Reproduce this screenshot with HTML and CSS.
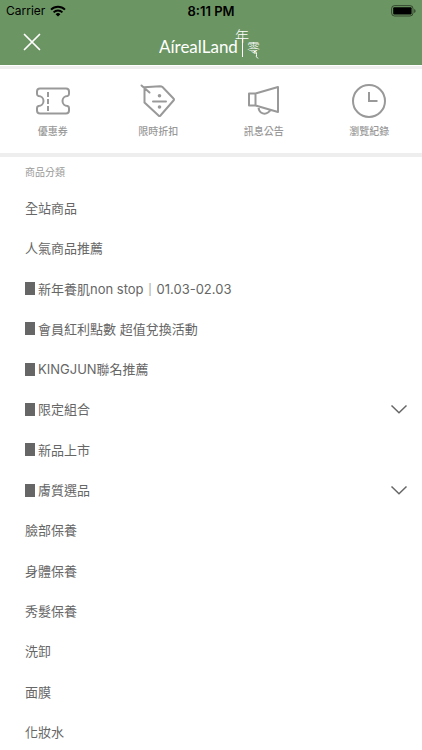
FILE: index.html
```html
<!DOCTYPE html>
<html lang="zh-Hant">
<head>
<meta charset="utf-8">
<meta name="viewport" content="width=device-width, initial-scale=1">
<title>AírealLand 年零</title>
<link rel="stylesheet" href="styles.css">
</head>
<body>
<header class="top">
  <div class="status">
    <div class="carrier">
      <span>Carrier</span>
      <svg width="16" height="12" viewBox="0 0 16 12" aria-hidden="true">
        <g fill="none" stroke="#000" stroke-width="2">
          <path d="M1 4.6a10 10 0 0 1 14 0"/>
          <path d="M3.6 7.4a6.3 6.3 0 0 1 8.8 0"/>
        </g>
        <path d="M5.6 9.2a3.4 3.4 0 0 1 4.8 0L8 11.6z"/>
      </svg>
    </div>
    <time class="clock">8:11 PM</time>
    <svg class="battery" width="25" height="12" viewBox="0 0 25 12" aria-hidden="true">
      <rect x=".6" y=".6" width="21.4" height="10.4" rx="3" fill="none" stroke="#000" stroke-opacity=".5"/>
      <rect x="2.2" y="2.2" width="18.4" height="7.4" rx="1"/>
      <path d="M23.2 4v4q1.4-.6 1.4-2t-1.4-2z" fill-opacity=".55"/>
    </svg>
  </div>
  <div class="brand">
    <button class="close" type="button" aria-label="關閉">
      <svg width="18" height="18" viewBox="0 0 18 18" aria-hidden="true"><path d="M1.500 1.500l15 15M16.500 1.500l-15 15" fill="none" stroke="#fff" stroke-width="1.700" stroke-linecap="round"/></svg>
    </button>
    <a class="logo" href="#" aria-label="AírealLand 年零">
      <svg width="104" height="36" viewBox="0 0 104 36">
        <text class="logo-latin" x="0" y="29">AírealLand</text>
        <text class="logo-nian" x="76" y="17">年</text>
        <text class="logo-ling" x="88" y="28">零</text>
        <path d="M83.500 15v18M94.500 27q4 1 3 3.500t1.500 4" fill="none" stroke="#fff" stroke-width="1"/>
      </svg>
    </a>
  </div>
</header>

<nav class="shortcuts" aria-label="快捷">
  <a class="shortcut" href="#">
    <svg width="36" height="36" viewBox="0 0 36 36" aria-hidden="true">
      <path d="M5 5.500h26q3 0 3 3v2.500q0 1.500-1.500 2a5 5 0 0 0 0 10q1.500.5 1.500 2v2.500q0 3-3 3H5q-3 0-3-3V25q0-1.500 1.500-2a5 5 0 0 0 0-10Q2 12.500 2 11V8.500q0-3 3-3z"/>
      <path d="M13 9v5M13 16v5M13 23v5"/>
    </svg>
    <span>優惠券</span>
  </a>
  <a class="shortcut" href="#">
    <svg width="36" height="36" viewBox="0 0 36 36" aria-hidden="true">
      <path d="M4 4.200L20 3.200q1.500 0 2.500.8L33.500 15.500q1 1 0 2L20.500 32.500q-1 1-2 0L4.500 19.500V4.500M1.500 2.500l8 7M13 18.500h13" stroke-linecap="round"/>
      <circle class="dot" cx="19.500" cy="12.800" r="1.800"/><circle class="dot" cx="19.500" cy="24" r="1.800"/>
    </svg>
    <span>限時折扣</span>
  </a>
  <a class="shortcut" href="#">
    <svg width="36" height="36" viewBox="0 0 36 36" aria-hidden="true">
      <path d="M3 10.500h6.500v12H3zM9.500 10.500L32 4v25L9.500 22.500M12.500 23.500q0 4 2.500 6 3.500 2.500 7 0 2-1.200 2.500-3" stroke-linejoin="round"/>
    </svg>
    <span>訊息公告</span>
  </a>
  <a class="shortcut" href="#">
    <svg width="36" height="36" viewBox="0 0 36 36" aria-hidden="true">
      <circle cx="18" cy="18" r="16"/>
      <path d="M18 9v9h8.500"/>
    </svg>
    <span>瀏覽紀錄</span>
  </a>
</nav>

<main class="categories">
  <h2 class="heading">商品分類</h2>
  <ul class="list">
    <li><a class="row" href="#">全站商品</a></li>
    <li><a class="row" href="#">人氣商品推薦</a></li>
    <li><a class="row marked" href="#">新年養肌non stop｜01.03-02.03</a></li>
    <li><a class="row marked" href="#">會員紅利點數 超值兌換活動</a></li>
    <li><a class="row marked" href="#">KINGJUN聯名推薦</a></li>
    <li><button class="row marked" type="button" aria-expanded="false">限定組合<svg class="chevron" width="18" height="10" viewBox="0 0 18 10" aria-hidden="true"><path d="M1.500 1.500L9 8.700l7.500-7.200"/></svg></button></li>
    <li><a class="row marked" href="#">新品上市</a></li>
    <li><button class="row marked" type="button" aria-expanded="false">膚質選品<svg class="chevron" width="18" height="10" viewBox="0 0 18 10" aria-hidden="true"><path d="M1.500 1.500L9 8.700l7.500-7.200"/></svg></button></li>
    <li><a class="row" href="#">臉部保養</a></li>
    <li><a class="row" href="#">身體保養</a></li>
    <li><a class="row" href="#">秀髮保養</a></li>
    <li><a class="row" href="#">洗卸</a></li>
    <li><a class="row" href="#">面膜</a></li>
    <li><a class="row" href="#">化妝水</a></li>
  </ul>
</main>
</body>
</html>
```
FILE: styles.css
```css
* {
  box-sizing: border-box;
}

body {
  margin: 0;
  min-height: 100vh;
  display: flex;
  flex-direction: column;
  background: #fff;
  color: #666;
  font: 13px/20px Inter, "Noto Sans CJK TC", sans-serif;
}

a {
  color: inherit;
  text-decoration: none;
}

button {
  border: 0;
  background: none;
  color: inherit;
  font: inherit;
  cursor: pointer;
}

svg {
  display: block;
  flex: none;
}

.top {
  background: #6b9562;
  padding-bottom: 3px;
}

.status {
  display: grid;
  grid-template-columns: 1fr auto 1fr;
  align-items: center;
  height: 22px;
  padding: 0 6px;
  color: #000;
  font-size: 12px;
}

.carrier {
  display: flex;
  align-items: center;
  gap: 5px;
}

.clock {
  font-size: 13px;
  font-weight: 600;
}

.battery {
  justify-self: end;
}

.brand {
  display: grid;
  grid-template-columns: 1fr auto 1fr;
  align-items: center;
  height: 40px;
}

.close {
  justify-self: start;
  margin-left: 15px;
  padding: 8px;
}

.logo text {
  fill: #fff;
}

.logo .logo-latin {
  font: 17px Lato, sans-serif;
}

.logo .logo-nian {
  font: 300 14px "Noto Sans CJK TC", sans-serif;
}

.logo .logo-ling {
  font: 300 13px "Noto Sans CJK TC", sans-serif;
}

.shortcuts {
  display: grid;
  grid-template-columns: repeat(4, 1fr);
  margin-top: 1px;
  padding: 14px 0 13px;
  border-top: 3px solid #eee;
  border-bottom: 4px solid #eee;
}

.shortcut {
  display: flex;
  flex-direction: column;
  align-items: center;
  gap: 3px;
  color: #999;
  font-size: 10px;
  font-weight: 500;
  line-height: 18px;
}

.shortcut svg {
  fill: none;
  stroke: #999;
  stroke-width: 2;
}

.shortcut .dot {
  fill: #999;
  stroke: none;
}

.categories {
  flex: 1;
  display: flex;
  flex-direction: column;
}

.heading {
  margin: 0;
  padding: 5px 25px 10px;
  color: #999;
  font-size: 10px;
  font-weight: 400;
}

.list {
  flex: 1;
  display: flex;
  flex-direction: column;
  justify-content: space-between;
  margin: 0;
  padding: 0 0 2px;
  list-style: none;
}

.row {
  display: flex;
  align-items: center;
  width: 100%;
  height: 32px;
  padding: 0 14px 0 25px;
  text-align: left;
}

.marked::before {
  content: "";
  width: 10px;
  height: 13px;
  margin-right: 3px;
  background: #666;
}

.chevron {
  margin-left: auto;
  fill: none;
  stroke: #666;
  stroke-width: 1.5;
}
```
